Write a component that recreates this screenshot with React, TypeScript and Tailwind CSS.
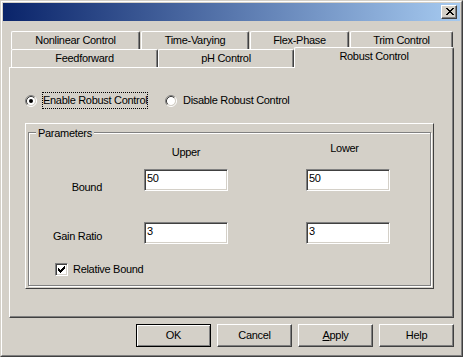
import React from "react";

function Radio({ checked }: { checked?: boolean }) {
  return (
    <svg width="12" height="12" viewBox="0 0 12 12" className="shrink-0">
      <circle cx="6" cy="6" r="4" fill="#ffffff" />
      <path d="M2.11 9.89A5.5 5.5 0 0 1 9.89 2.11" stroke="#808080" fill="none" />
      <path d="M9.89 2.11A5.5 5.5 0 0 1 2.11 9.89" stroke="#ffffff" fill="none" />
      <path d="M2.82 9.18A4.5 4.5 0 0 1 9.18 2.82" stroke="#404040" fill="none" />
      <path d="M9.18 2.82A4.5 4.5 0 0 1 2.82 9.18" stroke="#d4d0c8" fill="none" />
      {checked && <circle cx="6" cy="6" r="2" fill="#000000" />}
    </svg>
  );
}

function Field({ value, pos }: { value: string; pos: string }) {
  return (
    <div
      className={
        "w-[84px] h-[22px] bg-white border border-t-[#808080] border-l-[#808080] border-r-white border-b-white shadow-[inset_1px_1px_0_#404040,inset_-1px_-1px_0_#d4d0c8] pl-[2px] pt-[2px] leading-[13px] " +
        pos
      }
    >
      {value}
    </div>
  );
}

function BackTab({ w, children }: { w: string; children: React.ReactNode }) {
  return (
    <div
      className={
        "h-[18px] border-t border-l border-r border-t-white border-l-white border-r-[#404040] shadow-[inset_-1px_0_0_#808080] rounded-t-[2px] pt-[2px] text-center leading-[13px] whitespace-nowrap " +
        w
      }
    >
      {children}
    </div>
  );
}

function Btn({ children, def }: { children: React.ReactNode; def?: boolean }) {
  return (
    <div
      className={
        def
          ? "w-[75px] h-[23px] border border-black shadow-[inset_1px_1px_0_#ffffff,inset_-1px_-1px_0_#808080] flex items-center justify-center leading-[13px]"
          : "w-[75px] h-[23px] border border-t-white border-l-white border-r-[#404040] border-b-[#404040] shadow-[inset_-1px_-1px_0_#808080] flex items-center justify-center leading-[13px]"
      }
    >
      {children}
    </div>
  );
}

export default function App() {
  return (
    <div className="w-[463px] h-[357px] bg-[#d4d0c8] border border-t-[#d4d0c8] border-l-[#d4d0c8] border-r-[#404040] border-b-[#404040] font-['Liberation_Sans',Arial,sans-serif] text-[11px] tracking-[-0.3px] text-black overflow-hidden">
      <div className="h-full border border-t-white border-l-white border-r-[#808080] border-b-[#808080] p-[1px] flex flex-col">
        {/* title bar */}
        <div className="h-[18px] shrink-0 flex items-center justify-end pr-[3px] bg-[linear-gradient(to_right,#0a246a,#a6caf0)]">
          <div className="w-[16px] h-[14px] bg-[#d4d0c8] border border-t-white border-l-white border-r-[#404040] border-b-[#404040] shadow-[inset_-1px_-1px_0_#808080] pl-[4px] pt-[2px]">
            <svg width="8" height="7" viewBox="0 0 8 7" shapeRendering="crispEdges" className="block">
              <path
                fill="#000"
                d="M0 0h2v1h-2z M6 0h2v1h-2z M1 1h2v1h-2z M5 1h2v1h-2z M2 2h4v1h-4z M3 3h2v1h-2z M2 4h4v1h-4z M1 5h2v1h-2z M5 5h2v1h-2z M0 6h2v1h-2z M6 6h2v1h-2z"
              />
            </svg>
          </div>
        </div>

        {/* body */}
        <div className="pt-[10px] pl-[6px] flex flex-col">
          <div className="w-[445px]">
            {/* tab row 1 */}
            <div className="flex h-[18px] pl-[2px] gap-[1px]">
              <BackTab w="w-[129px]">Nonlinear Control</BackTab>
              <BackTab w="w-[108px]">Time-Varying</BackTab>
              <BackTab w="w-[99px]">Flex-Phase</BackTab>
              <BackTab w="w-[103px]">Trim Control</BackTab>
            </div>
            {/* tab row 2 */}
            <div className="flex h-[18px] pl-[2px]">
              <BackTab w="w-[147px]">Feedforward</BackTab>
              <BackTab w="w-[136px]">pH Control</BackTab>
              <div className="relative z-10 -mt-[2px] h-[21px] w-[160px] bg-[#d4d0c8] border-t border-l border-r border-t-white border-l-white border-r-[#404040] shadow-[inset_-1px_0_0_#808080] rounded-t-[2px] pt-[2px] text-center leading-[13px] whitespace-nowrap">
                Robust Control
              </div>
            </div>
            {/* panel */}
            <div className="h-[251px] w-[445px] border border-t-white border-l-white border-r-[#404040] border-b-[#404040] shadow-[inset_-1px_-1px_0_#808080] flex flex-col">
              {/* radios */}
              <div className="mt-[24px] h-[17px] flex items-center pl-[15px] leading-[13px]">
                <Radio checked />
                <span className="ml-[5px] w-[106px] h-[17px] border border-dotted border-black pl-[0px] pt-[1px] whitespace-nowrap">
                  Enable Robust Control
                </span>
                <span className="ml-[17px]">
                  <Radio />
                </span>
                <span className="ml-[6px] whitespace-nowrap">Disable Robust Control</span>
              </div>

              {/* outer frame */}
              <div className="mt-[14px] ml-[15px] w-[409px] h-[166px] border border-t-white border-l-white border-r-[#404040] border-b-[#404040]">
                <div className="relative mt-[8px] ml-[2px] w-[403px] h-[154px] border border-[#808080] shadow-[inset_1px_1px_0_#ffffff,1px_1px_0_#ffffff] leading-[13px]">
                  <span className="absolute -top-[6px] left-[7px] px-[2px] bg-[#d4d0c8]">Parameters</span>

                  {/* header */}
                  <div className="mt-[9px] flex items-start">
                    <div className="w-[73px]" />
                    <div className="ml-[42px] w-[84px] mt-[4px] text-center">Upper</div>
                    <div className="ml-[78px] w-[84px] pr-[7px] text-center">Lower</div>
                  </div>

                  {/* bound */}
                  <div className="mt-[10px] h-[22px] flex items-start">
                    <div className="w-[73px] mt-[12px] text-right">Bound</div>
                    <Field value="50" pos="ml-[42px]" />
                    <Field value="50" pos="ml-[78px]" />
                  </div>

                  {/* gain ratio */}
                  <div className="mt-[31px] h-[22px] flex items-start">
                    <div className="w-[73px] mt-[8px] text-right whitespace-nowrap">Gain Ratio</div>
                    <Field value="3" pos="ml-[42px]" />
                    <Field value="3" pos="ml-[78px]" />
                  </div>

                  {/* checkbox */}
                  <div className="mt-[19px] h-[13px] flex items-center pl-[26px]">
                    <div className="w-[13px] h-[13px] bg-white border border-t-[#808080] border-l-[#808080] border-r-white border-b-white shadow-[inset_1px_1px_0_#404040,inset_-1px_-1px_0_#d4d0c8] pl-[2px] pt-[2px]">
                      <svg width="7" height="7" viewBox="0 0 7 7" shapeRendering="crispEdges" className="block">
                        <path
                          fill="#000"
                          d="M6 0h1v1h-1z M5 1h2v1h-2z M0 2h1v1h-1z M4 2h3v1h-3z M0 3h2v1h-2z M3 3h3v1h-3z M0 4h5v1h-5z M1 5h3v1h-3z M2 6h1v1h-1z"
                        />
                      </svg>
                    </div>
                    <span className="ml-[5px] whitespace-nowrap">Relative Bound</span>
                  </div>
                </div>
              </div>
            </div>

            {/* buttons */}
            <div className="mt-[6px] flex justify-end gap-[6px]">
              <Btn def>OK</Btn>
              <Btn>Cancel</Btn>
              <Btn>
                <span>
                  <span className="underline">A</span>pply
                </span>
              </Btn>
              <Btn>Help</Btn>
            </div>
          </div>
        </div>
      </div>
    </div>
  );
}
